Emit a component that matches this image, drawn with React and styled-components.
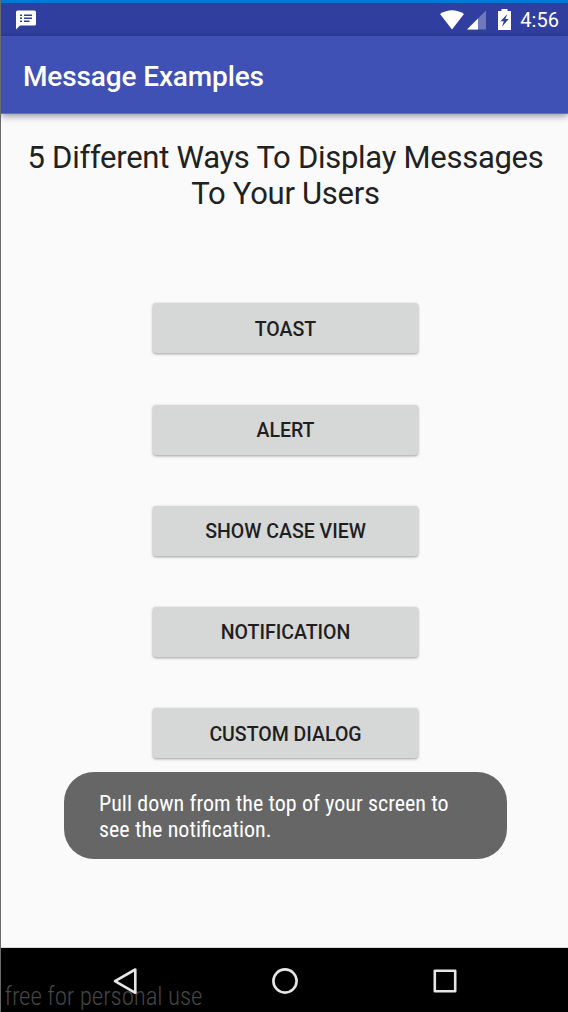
import React from "react";
import styled, { createGlobalStyle } from "styled-components";

const GlobalStyle = createGlobalStyle`
  body { margin: 0; background: #fafafa; }
  * { box-sizing: border-box; }
`;

const Screen = styled.div`
  width: 568px;
  height: 1012px;
  display: flex;
  flex-direction: column;
  position: relative;
  overflow: hidden;
  border-left: 1px solid #6a6a6a;
  background: #fafafa;
  font-family: Roboto, sans-serif;
`;

const WindowEdge = styled.div`
  flex: none;
  height: 3px;
  margin-left: -1px;
  background: #0078d7;
`;

const StatusBar = styled.header`
  flex: none;
  height: 33px;
  padding: 0 9px 0 15px;
  display: flex;
  align-items: center;
  background: #303f9f;
  color: #fff;
`;

const StatusIcons = styled.div`
  margin-left: auto;
  display: flex;
  align-items: center;
`;

const StatusIcon = styled.svg`
  display: block;
  margin-right: ${(p) => p.$gap || 0}px;
`;

const Clock = styled.span`
  padding-top: 2px;
  font-size: 20px;
  font-weight: 450;
  letter-spacing: 0.05px;
  line-height: 31px;
`;

const AppBar = styled.div`
  flex: none;
  height: 78px;
  padding: 4px 0 0 22px;
  display: flex;
  align-items: center;
  background: #3f51b5;
  border-bottom: 1px solid #6572c3;
  box-shadow: 0 2px 7px rgba(0, 0, 0, 0.42);
  z-index: 1;
`;

const AppTitle = styled.h1`
  margin: 0;
  color: #fff;
  font-size: 28px;
  font-weight: 500;
  letter-spacing: -0.13px;
  line-height: 36px;
  white-space: nowrap;
`;

const Content = styled.main`
  flex: 1;
  display: flex;
  flex-direction: column;
  align-items: center;
  padding: 26px 0 0 2px;
  border-bottom: 1px solid #d8d8d8;
`;

const Heading = styled.h2`
  margin: 0 0 91.4px;
  color: #212121;
  font-size: 31px;
  font-weight: 400;
  letter-spacing: -0.28px;
  line-height: 36px;
  text-align: center;
  white-space: nowrap;
`;

const ButtonList = styled.div`
  display: flex;
  flex-direction: column;
  gap: 51.2px;
`;

const RaisedButton = styled.button`
  width: 265px;
  height: 50px;
  padding: 3px 0 0;
  border: 0;
  border-radius: 3px;
  background: #d6d7d7;
  color: #1f1f1f;
  font: 500 19.5px/24px Roboto, sans-serif;
  box-shadow: 0 1px 3px rgba(0, 0, 0, 0.38);
`;

const Toast = styled.div`
  position: absolute;
  left: 63px;
  top: 772px;
  width: 443px;
  height: 87px;
  padding: 19px 35px;
  border-radius: 30px;
  background: #666;
  z-index: 2;
`;

const ToastText = styled.p`
  margin: 0;
  color: #fff;
  font-size: 22px;
  font-stretch: 75%;
  word-spacing: 0.25px;
  line-height: 26px;
  white-space: nowrap;
`;

const NavBar = styled.nav`
  flex: none;
  height: 64px;
  padding: 1px 0 0 1.5px;
  display: flex;
  justify-content: center;
  align-items: center;
  gap: 130px;
  background: #000;
`;

const NavIcon = styled.svg`
  display: block;
  width: 30px;
  height: 30px;
  fill: none;
  stroke: #e6e6e6;
  stroke-width: 2.6;
  stroke-linejoin: round;
`;

const Watermark = styled.span`
  position: absolute;
  left: 3.5px;
  bottom: 0;
  color: rgba(255, 255, 255, 0.28);
  font-size: 25px;
  font-weight: 300;
  font-stretch: 75%;
  letter-spacing: -0.12px;
  line-height: 30px;
  white-space: nowrap;
`;

const LABELS = ["TOAST", "ALERT", "SHOW CASE VIEW", "NOTIFICATION", "CUSTOM DIALOG"];

export default function App() {
  return (
    <>
      <GlobalStyle />
      <Screen>
        <WindowEdge />
        <StatusBar>
          <StatusIcon width="20" height="20" viewBox="0 0 20 20">
            <path fill="#fff" d="M1.500 0.500h17q1.500 0 1.500 1.500V14q0 1.500-1.500 1.500H4l-4 4V2q0-1.500 1.500-1.500z" />
            <path stroke="#303f9f" strokeWidth="1.5" d="M4 5.300h2M8 5.300h8M4 8.300h2M8 8.300h8M4 11.300h2M8 11.300h5.500" />
          </StatusIcon>
          <StatusIcons>
            <StatusIcon width="24" height="20" viewBox="0 0 24 20" $gap={3}>
              <path fill="#fff" d="M0 4Q12-3.500 24 4L12 19.500z" />
            </StatusIcon>
            <StatusIcon width="19" height="20" viewBox="0 0 19 20" $gap={12}>
              <path fill="#fff" fillOpacity=".3" d="M19 .5v19H0z" />
              <path fill="#fff" d="M11 8.500v11H0z" />
            </StatusIcon>
            <StatusIcon width="13" height="21" viewBox="0 0 13 21" $gap={9}>
              <path fill="#fff" d="M3.500 0h6v2H13v19H0V2h3.500z" />
              <path fill="#303f9f" d="M9.300 5L2.500 12.200h3.300l-1.800 5.500L10.700 10H7.300z" />
            </StatusIcon>
            <Clock>4:56</Clock>
          </StatusIcons>
        </StatusBar>
        <AppBar>
          <AppTitle>Message Examples</AppTitle>
        </AppBar>
        <Content>
          <Heading>
            5 Different Ways To Display Messages
            <br />
            To Your Users
          </Heading>
          <ButtonList>
            {LABELS.map((label) => (
              <RaisedButton key={label}>{label}</RaisedButton>
            ))}
          </ButtonList>
        </Content>
        <NavBar>
          <NavIcon viewBox="0 0 30 30">
            <path d="M25.300 3.500v23.300L5 15.200z" />
          </NavIcon>
          <NavIcon viewBox="0 0 30 30">
            <circle cx="15" cy="15" r="11.600" />
          </NavIcon>
          <NavIcon viewBox="0 0 30 30">
            <rect x="4.800" y="4.800" width="20.400" height="20.400" />
          </NavIcon>
        </NavBar>
        <Toast>
          <ToastText>
            Pull down from the top of your screen to
            <br />
            see the notification.
          </ToastText>
        </Toast>
        <Watermark>free for personal use</Watermark>
      </Screen>
    </>
  );
}
